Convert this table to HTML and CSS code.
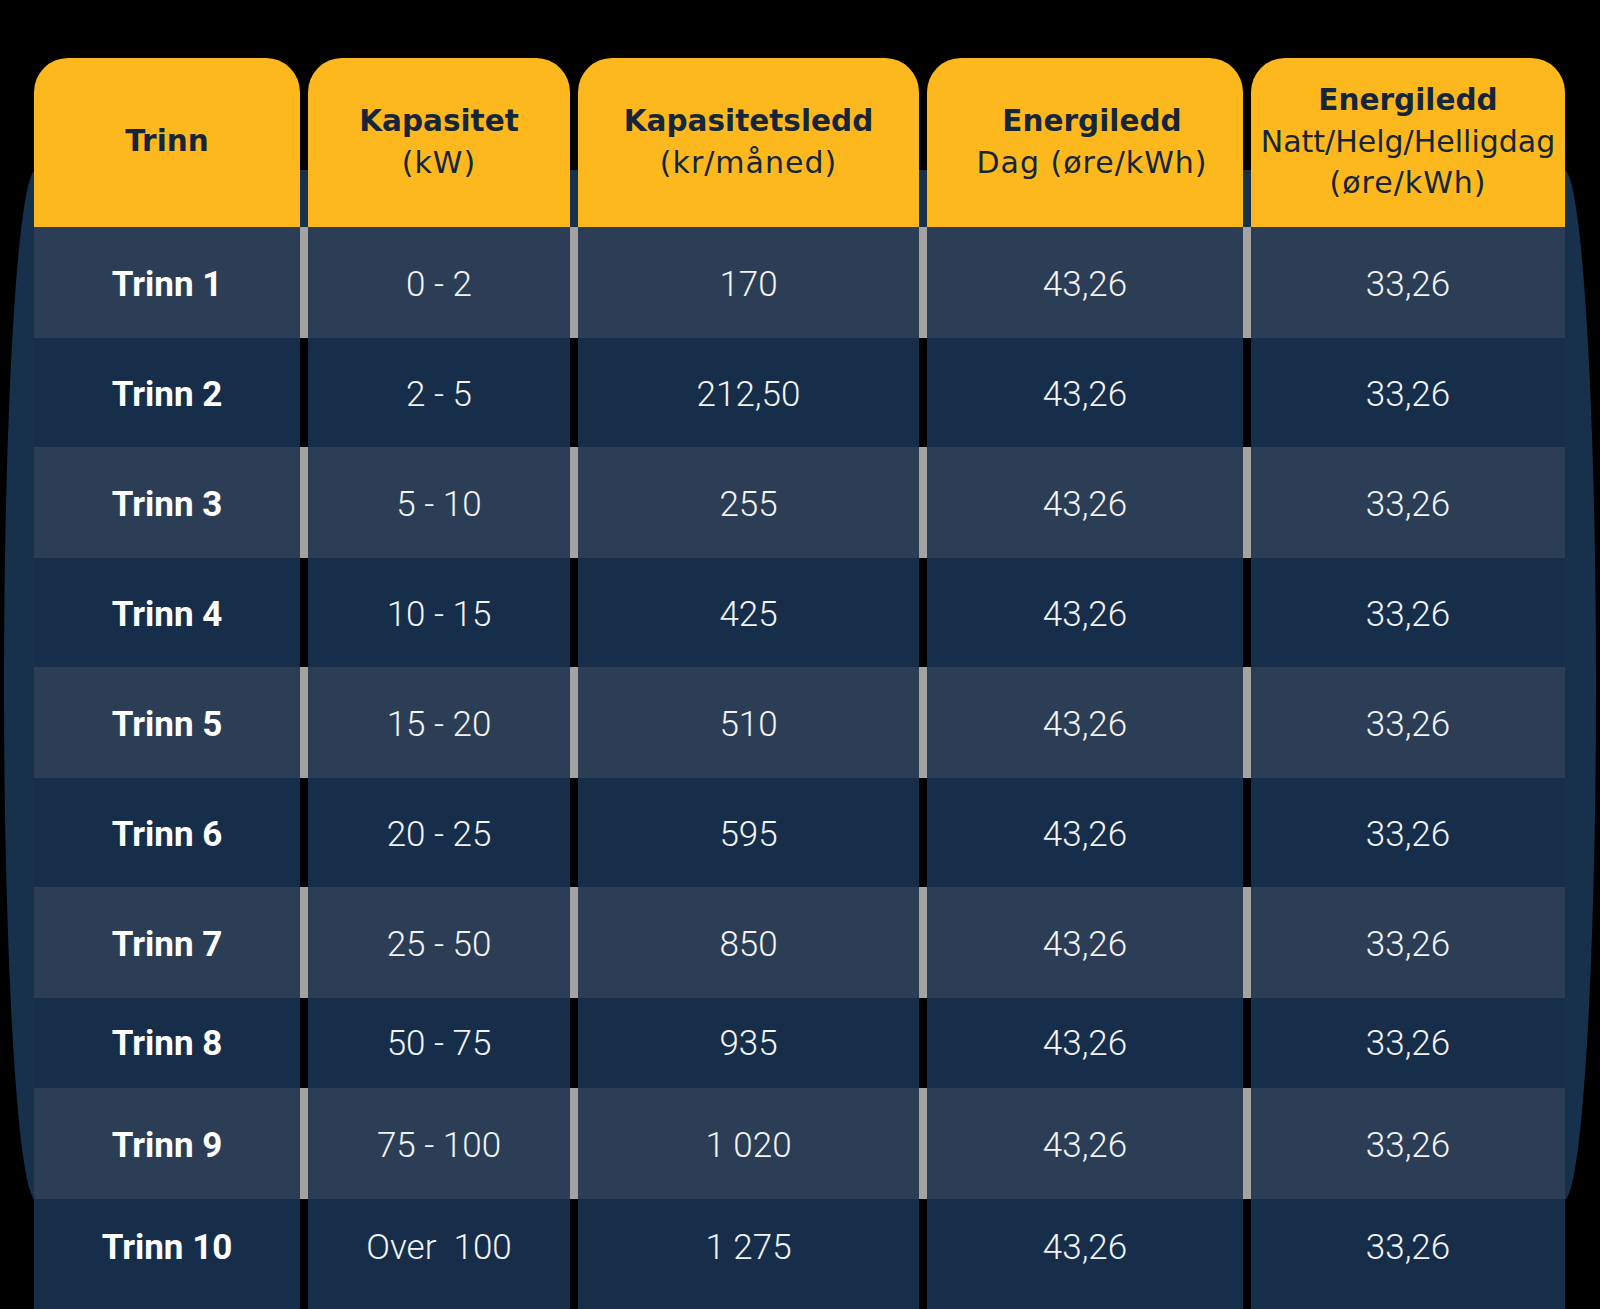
FILE: index.html
```html
<!DOCTYPE html>
<html lang="no">
<head>
<meta charset="utf-8">
<title>Nettleie – trinn</title>
<link rel="stylesheet" href="styles.css">
</head>
<body>
<div class="board">
  <div class="table">
    <div class="row head">
      <div class="hcell"><span class="ht">Trinn</span></div>
      <div class="hcell"><span class="ht">Kapasitet</span><span class="hs">(kW)</span></div>
      <div class="hcell"><span class="ht">Kapasitetsledd</span><span class="hs">(kr/måned)</span></div>
      <div class="hcell shift"><span class="ht">Energiledd</span><span class="hs">Dag (øre/kWh)</span></div>
      <div class="hcell"><span class="ht">Energiledd</span><span class="hs tight">Natt/Helg/Helligdag</span><span class="hs">(øre/kWh)</span></div>
    </div>

    <div class="row light">
      <div class="cell name">Trinn 1</div><div class="cell">0 - 2</div><div class="cell">170</div><div class="cell">43,26</div><div class="cell">33,26</div>
    </div>
    <div class="row dark">
      <div class="cell name">Trinn 2</div><div class="cell">2 - 5</div><div class="cell">212,50</div><div class="cell">43,26</div><div class="cell">33,26</div>
    </div>
    <div class="row light">
      <div class="cell name">Trinn 3</div><div class="cell">5 - 10</div><div class="cell">255</div><div class="cell">43,26</div><div class="cell">33,26</div>
    </div>
    <div class="row dark">
      <div class="cell name">Trinn 4</div><div class="cell">10 - 15</div><div class="cell">425</div><div class="cell">43,26</div><div class="cell">33,26</div>
    </div>
    <div class="row light">
      <div class="cell name">Trinn 5</div><div class="cell">15 - 20</div><div class="cell">510</div><div class="cell">43,26</div><div class="cell">33,26</div>
    </div>
    <div class="row dark">
      <div class="cell name">Trinn 6</div><div class="cell">20 - 25</div><div class="cell">595</div><div class="cell">43,26</div><div class="cell">33,26</div>
    </div>
    <div class="row light">
      <div class="cell name">Trinn 7</div><div class="cell">25 - 50</div><div class="cell">850</div><div class="cell">43,26</div><div class="cell">33,26</div>
    </div>
    <div class="row dark short">
      <div class="cell name">Trinn 8</div><div class="cell">50 - 75</div><div class="cell">935</div><div class="cell">43,26</div><div class="cell">33,26</div>
    </div>
    <div class="row light">
      <div class="cell name">Trinn 9</div><div class="cell">75 - 100</div><div class="cell">1 020</div><div class="cell">43,26</div><div class="cell">33,26</div>
    </div>
    <div class="row dark last">
      <div class="cell name">Trinn 10</div><div class="cell">Over&nbsp; 100</div><div class="cell">1 275</div><div class="cell">43,26</div><div class="cell">33,26</div>
    </div>
  </div>
</div>
</body>
</html>
```

FILE: styles.css
```css
html, body {
  margin: 0;
  padding: 0;
  background: #000;
}

body {
  width: 1600px;
  height: 1309px;
  overflow: hidden;
  font-family: Roboto, "Liberation Sans", sans-serif;
}

.board {
  position: relative;
  padding: 58px 35px 0 34px;
}

/* navy barrel-shaped backdrop behind the table */
.board::before {
  content: "";
  position: absolute;
  left: 4px;
  right: 4px;
  top: 170px;
  height: 1030px;
  background: #17304c;
  border-radius: 32px / 50%;
}

.table {
  position: relative;
  display: flex;
  flex-direction: column;
}

.row {
  display: grid;
  grid-template-columns: 266px 262px 341px 316px 314px;
  column-gap: 8px;
}

.head {
  height: 169px;
}

.hcell {
  background: #fdb81e;
  border-radius: 34px 34px 0 0;
  display: flex;
  flex-direction: column;
  align-items: center;
  justify-content: center;
  color: #16263a;
  font-family: "DejaVu Sans", "Open Sans", sans-serif;
  line-height: 41px;
  text-align: center;
  padding-bottom: 2px;
  white-space: nowrap;
}

.hcell.shift {
  padding-left: 14px;
}

.ht {
  font-size: 29.5px;
  font-weight: bold;
}

.hs {
  font-size: 30px;
  font-weight: normal;
  letter-spacing: 1px;
}

.hs.tight {
  letter-spacing: 0;
}

.light {
  height: 111px;
  background: #a3a3a3;
}

.dark {
  height: 109px;
  background: #000;
}

.short {
  height: 90px;
}

.last {
  height: 110px;
}

.cell {
  display: flex;
  align-items: center;
  justify-content: center;
  color: #f2f4f7;
  font-size: 35px;
  font-weight: 300;
  padding-top: 4px;
}

.light .cell {
  background: #2c3e55;
}

.dark .cell {
  background: #172e4a;
}

.short .cell {
  padding-top: 0;
}

.last .cell {
  padding-top: 0;
  padding-bottom: 14px;
}

.cell.name {
  font-weight: bold;
  color: #fff;
}
```
